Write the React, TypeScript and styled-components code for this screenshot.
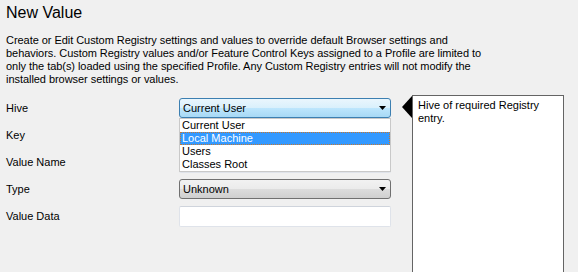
import styled, { createGlobalStyle } from "styled-components"

const GlobalStyle = createGlobalStyle`
    html, body {
        margin: 0;
        background: #f0f0f0;
    }
    body {
        font-family: "Liberation Sans", Arial, sans-serif;
        font-size: 11px;
        color: #000;
    }
`

const Page = styled.div`
    width: 578px;
    height: 272px;
    overflow: hidden;
    box-sizing: border-box;
    padding: 3px 6px 0;
`

const Title = styled.h1`
    margin: 0;
    font-size: 16px;
    font-weight: normal;
    line-height: 20px;
`

const Description = styled.p`
    margin: 11px 0 0;
    white-space: nowrap;
    line-height: 13px;
    letter-spacing: -0.05px;
`

const FormArea = styled.div`
    display: flex;
    align-items: flex-start;
    margin-top: 9px;
`

const Fields = styled.div`
    display: grid;
    grid-template-columns: 173px 212px;
    grid-auto-rows: 20px;
    row-gap: 7px;
    padding-top: 3px;
`

const Label = styled.label`
    align-self: center;
    line-height: 13px;
`

const Cell = styled.div`
    position: relative;
`

interface IVariant {
    active?: boolean
}

const Combo = styled.div<IVariant>`
    height: 20px;
    box-sizing: border-box;
    display: flex;
    align-items: center;
    justify-content: space-between;
    padding: 0 4px 0 3px;
    border-radius: 3px;
    border: 1px solid ${p => p.active ? "#3c7fb1" : "#707070"};
    background: ${p => p.active
        ? "linear-gradient(#eaf6fd 0%, #d9f0fc 50%, #bee6fd 50%, #a7d9f5 100%)"
        : "linear-gradient(#f2f2f2 0%, #ebebeb 50%, #dddddd 50%, #cfcfcf 100%)"};
`

const TextBox = styled.div`
    height: 21px;
    box-sizing: border-box;
    background: #fff;
    border: 1px solid #dfe3ea;
    border-top-color: #cfd4dc;
    border-radius: 2px;
`

const DropList = styled.ul`
    position: absolute;
    top: 20px;
    left: 0;
    right: 0;
    z-index: 2;
    margin: 0;
    padding: 0;
    list-style: none;
    background: #fff;
    border: 1px solid #c9c9c9;
`

const Option = styled.li<IVariant>`
    height: 13px;
    box-sizing: border-box;
    color: ${p => p.active ? "#fff" : "#000"};
    background: ${p => p.active ? "#3399ff" : "transparent"};
    border: ${p => p.active ? "1px dotted #c8782f" : "none"};
    line-height: ${p => p.active ? "11px" : "13px"};
    padding-left: ${p => p.active ? "1px" : "2px"};
`

const Help = styled.div`
    position: relative;
    margin-left: 21px;
    width: 152px;
    height: 200px;
    box-sizing: border-box;
    padding: 3px 5px;
    background: #fff;
    border: 1px solid #646464;
    line-height: 13px;

    &::before {
        content: "";
        position: absolute;
        left: -11px;
        top: 0;
        border-top: 11px solid transparent;
        border-bottom: 11px solid transparent;
        border-right: 10px solid #000;
    }
`

const Arrow = () => (
    <svg width="7" height="4" viewBox="0 0 7 4">
        <polygon points="0,0 7,0 3.5,4" fill="#000" />
    </svg>
)

const hives = ["Current User", "Local Machine", "Users", "Classes Root"]

const intro = [
    "Create or Edit Custom Registry settings and values to override default Browser settings and",
    "behaviors. Custom Registry values and/or Feature Control Keys assigned to a Profile are limited to",
    "only the tab(s) loaded using the specified Profile. Any Custom Registry entries will not modify the",
    "installed browser settings or values.",
]

export default function App() {
    return (
        <>
            <GlobalStyle />
            <Page>
                <Title>New Value</Title>
                <Description>
                    {intro.map((line, i) => (
                        <span key={i}>{line}{i < intro.length - 1 && <br />}</span>
                    ))}
                </Description>
                <FormArea>
                    <Fields>
                        <Label>Hive</Label>
                        <Cell>
                            <Combo active>
                                <span>Current User</span>
                                <Arrow />
                            </Combo>
                            <DropList>
                                {hives.map((h, i) => (
                                    <Option key={h} active={i === 1}>{h}</Option>
                                ))}
                            </DropList>
                        </Cell>
                        <Label>Key</Label>
                        <TextBox />
                        <Label>Value Name</Label>
                        <TextBox />
                        <Label>Type</Label>
                        <Combo>
                            <span>Unknown</span>
                            <Arrow />
                        </Combo>
                        <Label>Value Data</Label>
                        <TextBox />
                    </Fields>
                    <Help>Hive of required Registry entry.</Help>
                </FormArea>
            </Page>
        </>
    )
}
